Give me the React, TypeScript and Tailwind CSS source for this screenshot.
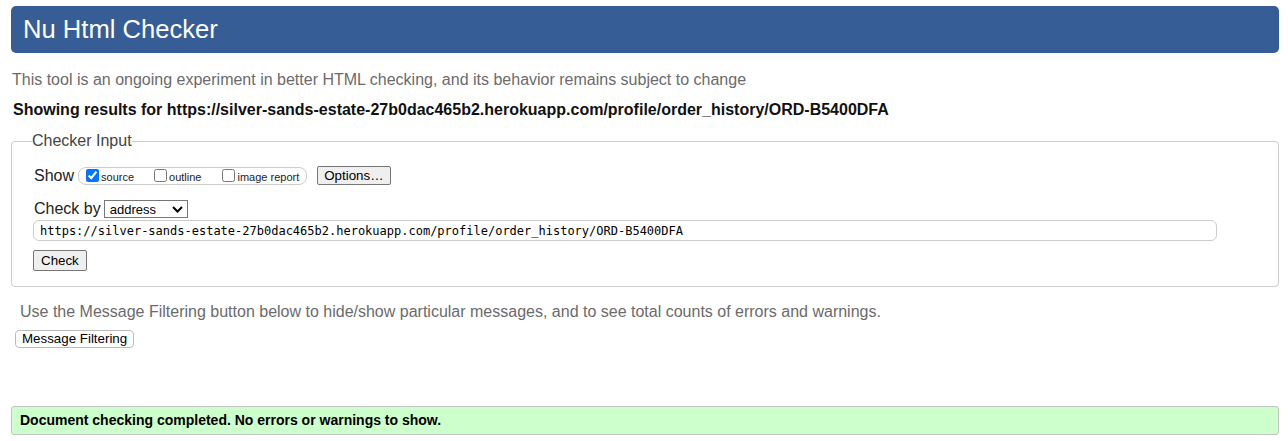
import { useState } from "react";

const pageUrl =
    "https://silver-sands-estate-27b0dac465b2.herokuapp.com/profile/order_history/ORD-B5400DFA";

export default function App() {
    const [show, setShow] = useState({ source: true, outline: false, image: false });

    const options = [
        { key: "source", label: "source", gap: "" },
        { key: "outline", label: "outline", gap: "ml-[20px]" },
        { key: "image", label: "image report", gap: "ml-[21px]" },
    ] as const;

    return (
        <div className="min-h-screen bg-white pt-[6px] pl-[11px] pr-[9px] font-['Liberation_Sans',Arial,sans-serif] text-[#222]">
            {/* Title bar */}
            <div className="h-[47px] rounded-[5px] bg-[#365d95] flex items-center pl-[12px] text-white text-[25.6px] leading-none">
                Nu Html Checker
            </div>

            <p className="mt-[18px] ml-px text-[16px] leading-[18px] text-[#6b6b6b]">
                This tool is an ongoing experiment in better HTML checking, and its behavior remains subject to change
            </p>

            <p className="mt-[12px] ml-[2px] text-[16px] leading-[18px] font-bold text-[#111]">
                Showing results for {pageUrl}
            </p>

            {/* Checker input */}
            <fieldset className="mt-[13px] border border-[#ccc] rounded-[4px] pl-[21px] pr-[61px] pt-[16px] pb-[15px]">
                <legend className="-ml-[1px] text-[16px] leading-[18px] text-[#444]">Checker Input</legend>

                <div className="ml-px h-[19px] flex items-center">
                    <span className="text-[16px] leading-[18px]">Show</span>
                    <div className="ml-[4px] h-[18px] flex items-center border border-[#ccc] rounded-[8px] pl-[7px] pr-[7px]">
                        {options.map((o) => (
                            <label key={o.key} className={`${o.gap} flex items-center`}>
                                <input
                                    type="checkbox"
                                    className="m-0 w-[13px] h-[13px]"
                                    checked={show[o.key]}
                                    onChange={() => setShow({ ...show, [o.key]: !show[o.key] })}
                                />
                                <span className="ml-[2px] pt-[3px] text-[11px] leading-[13px]">{o.label}</span>
                            </label>
                        ))}
                    </div>
                    <button className="ml-[10px] h-[19px] px-[6px] bg-[#efefef] border border-[#767676] rounded-[2px] text-[13.33px] leading-none text-black">
                        Options…
                    </button>
                </div>

                <div className="ml-px mt-[15px] h-[18px] flex items-center">
                    <span className="text-[16px] leading-[18px]">Check by</span>
                    <div className="ml-[3px] w-[84px] h-[18px] flex items-center justify-between border border-[#767676] pl-[5px] pr-[4px] text-[13px] leading-none text-black">
                        <span>address</span>
                        <svg width="11" height="7" viewBox="0 0 11 7" fill="none">
                            <path d="M1 1l4.5 4.5L10 1" stroke="#000" strokeWidth="2" />
                        </svg>
                    </div>
                </div>

                <div className="mt-[2px] h-[21px] flex items-center border border-[#ccc] rounded-[6px] pl-[6px] font-['DejaVu_Sans_Mono',monospace] text-[12px] leading-none text-black">
                    {pageUrl}
                </div>

                <button className="mt-[9px] block h-[21px] px-[7px] bg-[#efefef] border border-[#767676] rounded-[2px] text-[13.33px] leading-none text-black">
                    Check
                </button>
            </fieldset>

            <p className="mt-[16px] ml-[9px] text-[16px] leading-[18px] text-[#6b6b6b]">
                Use the Message Filtering button below to hide/show particular messages, and to see total counts of errors and warnings.
            </p>

            <button className="mt-[9px] ml-[4px] block h-[18px] px-[6px] bg-white border border-[#bbb] rounded-[4px] text-[13.33px] leading-none text-black">
                Message Filtering
            </button>

            {/* Result */}
            <div className="mt-[58px] h-[29px] flex items-center pl-[8px] bg-[#ccffcc] border border-[#c4c4c4] rounded-[3px] text-[14px] font-bold text-black">
                Document checking completed. No errors or warnings to show.
            </div>
        </div>
    );
}
